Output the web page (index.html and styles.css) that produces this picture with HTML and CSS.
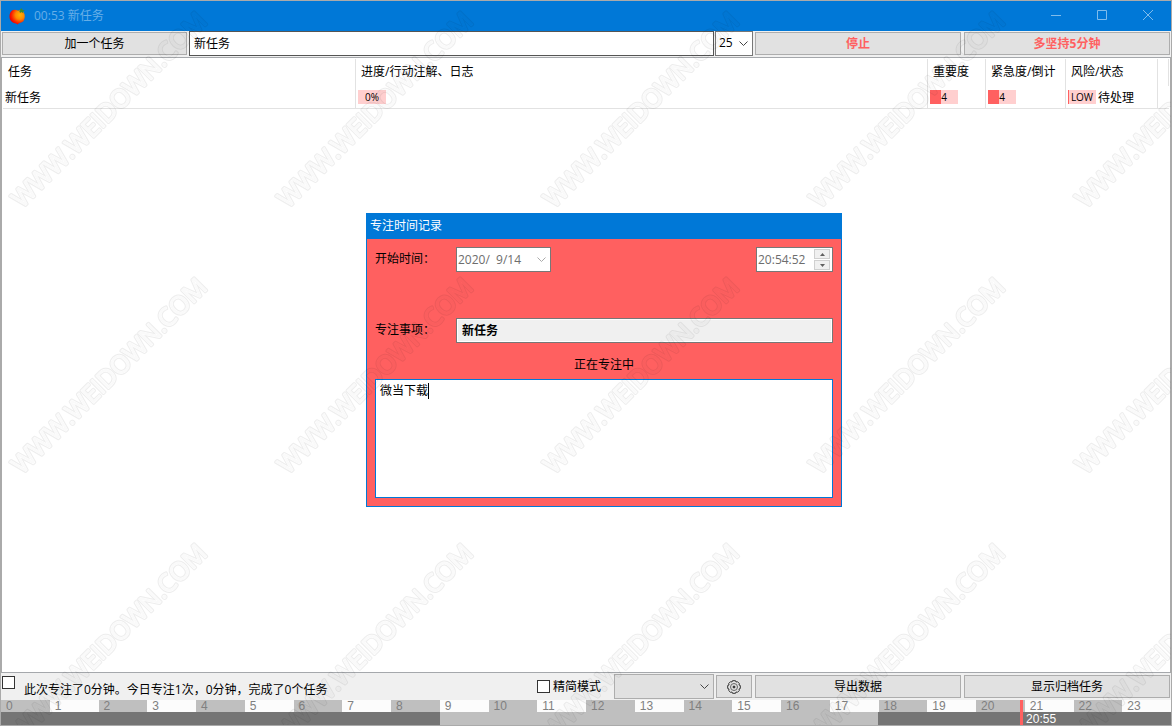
FILE: index.html
```html
<!DOCTYPE html>
<html lang="zh-CN">
<head>
<meta charset="utf-8">
<title>00:53 新任务</title>
<link rel="stylesheet" href="styles.css">
</head>
<body>
<div class="window">
  <header class="titlebar">
    <svg class="tomato" viewBox="0 0 17 17" aria-hidden="true">
      <defs><radialGradient id="skin" cx=".68" cy=".36" r=".7"><stop offset="0" stop-color="#ffb400"/><stop offset=".4" stop-color="#ff8a00"/><stop offset=".8" stop-color="#fb1c00"/><stop offset="1" stop-color="#e80000"/></radialGradient></defs>
      <path d="M3 2.500C5 1 7 2 9 2.500c2-.700 4-.200 5.500 1.500 2 3 1.500 6.500 0 9-1.500 1.500-3.500 2-4.500 2.300L8.500 16.500 7 15.500C4 15 1.500 13.500.700 10.500.200 7.500.500 4.500 3 2.500z" fill="url(#skin)"/>
      <path d="M8 2.500l3 .300.500-2 1.500-.300.500 1.500 2.500.500-2 1 .500 2-2-1.500-1.500 1-.500-1.700z" fill="#3f8a2c"/>
    </svg>
    <h1 class="caption">00:53 新任务</h1>
    <div class="window-buttons">
      <button type="button" aria-label="最小化"><svg viewBox="0 0 10 10"><path d="M0 5.500H10"/></svg></button>
      <button type="button" aria-label="最大化"><svg viewBox="0 0 10 10"><path d="M.500 .500H9.500V9.500H.500z"/></svg></button>
      <button type="button" aria-label="关闭"><svg viewBox="0 0 10 10"><path d="M0 0L10 10M10 0L0 10"/></svg></button>
    </div>
  </header>

  <div class="toolbar">
    <button type="button" class="btn">加一个任务</button>
    <input class="task-input" type="text" value="新任务" aria-label="任务名称">
    <div class="drop minutes">
      <select aria-label="分钟"><option>25</option></select>
      <svg class="chevron" viewBox="0 0 9 6"><path d="M.500 .500L4.500 4.500L8.500 .500"/></svg>
    </div>
    <button type="button" class="btn alert">停止</button>
    <button type="button" class="btn alert">多坚持5分钟</button>
  </div>

  <main class="list">
    <table class="tasks">
      <colgroup><col class="c-task"><col><col class="c-weight"><col class="c-urgent"><col class="c-risk"><col class="c-end"></colgroup>
      <thead>
        <tr><th>任务</th><th>进度/行动注解、日志</th><th>重要度</th><th>紧急度/倒计</th><th>风险/状态</th><th></th></tr>
      </thead>
      <tbody>
        <tr>
          <td class="name">新任务</td>
          <td><span class="meter">0%</span></td>
          <td><span class="meter part">4</span></td>
          <td><span class="meter part">4</span></td>
          <td><span class="meter low">LOW</span>待处理</td>
          <td></td>
        </tr>
      </tbody>
    </table>
  </main>

  <footer class="statusbar">
    <input class="tick status-tick" type="checkbox" aria-label="显示统计">
    <p class="summary">此次专注了0分钟。今日专注1次，0分钟，完成了0个任务</p>
    <label class="simple"><input class="tick" type="checkbox">精简模式</label>
    <div class="drop filter">
      <select aria-label="筛选"><option></option></select>
      <svg class="chevron" viewBox="0 0 9 6"><path d="M.500 .500L4.500 4.500L8.500 .500"/></svg>
    </div>
    <button type="button" class="btn settings" aria-label="设置">
      <svg class="gear" viewBox="0 0 14 14"><path d="M5.500 .700h3l.500 1.300 1.500-.300 1.800 1.800-.300 1.500 1.300.500v3l-1.300.500.300 1.500-1.800 1.800-1.500-.300-.500 1.300h-3l-.500-1.300-1.500.300-1.800-1.800.300-1.500-1.300-.500v-3l1.300-.500-.300-1.500 1.800-1.800 1.500.300z"/><circle class="ring" cx="7" cy="7" r="3.500"/><circle class="hub" cx="7" cy="7" r="1"/></svg>
    </button>
    <button type="button" class="btn">导出数据</button>
    <button type="button" class="btn">显示归档任务</button>
  </footer>

  <div class="timeline">
    <ol class="hours">
      <li>0</li><li>1</li><li>2</li><li>3</li><li>4</li><li>5</li><li>6</li><li>7</li><li>8</li><li>9</li><li>10</li><li>11</li><li>12</li><li>13</li><li>14</li><li>15</li><li>16</li><li>17</li><li>18</li><li>19</li><li>20</li><li>21</li><li>22</li><li>23</li>
    </ol>
    <div class="day"></div>
    <div class="now" style="left:87.100%"><span>20:55</span></div>
  </div>

  <section class="dialog" role="dialog" aria-labelledby="dialog-title">
    <h2 class="dialog-title" id="dialog-title">专注时间记录</h2>
    <form class="record">
      <div class="line first">
        <label for="start">开始时间：</label>
        <div class="field date">
          <input id="start" type="text" value="2020/&nbsp; 9/14">
          <svg class="chevron" viewBox="0 0 9 6"><path d="M.500 .500L4.500 4.500L8.500 .500"/></svg>
        </div>
        <div class="field time">
          <input type="text" value="20:54:52" aria-label="时间">
          <div class="spin">
            <button type="button" aria-label="增加"><svg viewBox="0 0 5 3"><path d="M0 3L2.500 0L5 3z"/></svg></button>
            <button type="button" aria-label="减少"><svg viewBox="0 0 5 3"><path d="M0 0L2.500 3L5 0z"/></svg></button>
          </div>
        </div>
      </div>
      <div class="line">
        <label for="subject">专注事项：</label>
        <input class="subject" id="subject" type="text" value="新任务" readonly>
      </div>
      <p class="state">正在专注中</p>
      <div class="note"><textarea aria-label="记录" spellcheck="false">微当下载</textarea><i class="caret"></i></div>
    </form>
  </section>

  <svg class="watermark" aria-hidden="true">
    <defs>
      <mask id="ring" maskUnits="userSpaceOnUse" x="0" y="0" width="266" height="266">
        <text class="mask-out" transform="translate(21 208) rotate(-45)">WWW.WEIDOWN.COM</text>
        <text class="mask-in" transform="translate(21 208) rotate(-45)">WWW.WEIDOWN.COM</text>
      </mask>
      <pattern id="mark" width="266" height="266" patternUnits="userSpaceOnUse">
        <rect class="mark-ring" width="266" height="266" mask="url(#ring)"/>
        <text class="mark-core" transform="translate(21 208) rotate(-45)">WWW.WEIDOWN.COM</text>
      </pattern>
    </defs>
    <rect width="100%" height="100%" fill="url(#mark)"/>
  </svg>
</div>
</body>
</html>
```

FILE: styles.css
```css
* { box-sizing: border-box; }

body, h1, h2, p, ol { margin: 0; padding: 0; }

body, button, input, select, textarea {
  font: 12px/16px "Open Sans", "Noto Sans CJK SC", sans-serif;
  color: #000;
}

.window {
  position: relative;
  display: flex;
  flex-direction: column;
  min-height: 100vh;
  border: 1px solid #aaa;
  background: #f0f0f0;
}

.titlebar {
  display: flex;
  align-items: center;
  height: 30px;
  padding-left: 8px;
  background: #0078d7;
}

.tomato { width: 17px; height: 17px; }

.caption {
  flex: 1;
  margin-left: 8px;
  font-size: 12px;
  font-weight: 400;
  color: #66aee7;
}

.window-buttons { display: flex; }

.window-buttons button {
  display: grid;
  place-items: center;
  width: 46px;
  height: 30px;
  padding: 0 0 2px;
  border: 0;
  background: none;
}

.window-buttons svg { width: 10px; height: 10px; fill: none; stroke: #80bceb; }

.toolbar {
  display: grid;
  grid-template-columns: 185px 1fr 38px 208px 209px;
  align-items: start;
  height: 26px;
  padding: 0 1px;
}

.btn {
  display: grid;
  place-items: center;
  height: 23px;
  padding: 0;
  border: 1px solid #adadad;
  background: #e1e1e1;
}

.toolbar .btn { margin-top: 1px; }
.toolbar .alert { margin-left: 2px; font-weight: 700; color: #ff6060; }
.toolbar .alert + .alert { margin-left: 3px; }

.task-input {
  min-width: 0;
  height: 25px;
  margin: 0 1px 0 2px;
  padding: 0 4px 2px;
  border: 1px solid #555;
  background: #fff;
}

.drop { position: relative; height: 25px; }

.drop select {
  width: 100%;
  height: 100%;
  padding: 0 3px 2px;
  border: 1px solid #777;
  border-radius: 0;
  background: #fff;
  appearance: none;
}

.chevron { width: 9px; height: 6px; fill: none; stroke: #444; pointer-events: none; }
.drop .chevron { position: absolute; right: 5px; top: 10px; }

.list {
  flex: 1;
  padding: 1px 1px 0;
  border: 1px solid #a5a8ac;
  border-color: #a5a8ac #aaa;
  background: #fff;
}

.tasks { width: 100%; table-layout: fixed; border-collapse: separate; border-spacing: 0; }
.c-task { width: 353px; }
.c-weight { width: 58px; }
.c-urgent { width: 80px; }
.c-risk { width: 92px; }
.c-end { width: 11px; }

.tasks th {
  height: 27px;
  padding: 0 5px 2px;
  border-right: 1px solid #e2e2e2;
  font-weight: 400;
  text-align: left;
  white-space: nowrap;
}

.tasks td {
  height: 23px;
  padding: 2px 2px 0;
  border: solid #e2e2e2;
  border-width: 0 1px 1px 0;
  white-space: nowrap;
}

.tasks td:last-child { border-right: 0; }

.meter {
  display: inline-block;
  width: 28px;
  height: 14px;
  margin-right: 2px;
  background: #ffcfcf;
  font-size: 10px;
  line-height: 14px;
  text-align: center;
  vertical-align: 1px;
}

.part { background: linear-gradient(to right, #ff6060 11px, #ffcfcf 11px); }
.low { background: linear-gradient(to right, #ff6060 1px, #ffcfcf 1px); }

.statusbar {
  display: grid;
  grid-template-columns: 22px 1fr 77px 100px 38px 209px 209px;
  align-items: start;
  height: 27px;
  padding: 1px 1px 0;
}

.statusbar .btn { margin: 1px 0 0 3px; }
.statusbar .settings { margin-left: 2px; }

.tick {
  width: 13px;
  height: 13px;
  margin: 0;
  border: 1px solid #333;
  background: #fff;
  appearance: none;
}

.status-tick { margin-top: 2px; }
.summary { padding-top: 8px; white-space: nowrap; }
.simple { display: flex; align-items: center; gap: 3px; height: 25px; white-space: nowrap; }
.filter select { border-color: #adadad; background: #e1e1e1; }
.gear { width: 14px; height: 14px; fill: none; stroke: #333; }
.gear .ring { stroke: #666; }
.gear .hub { fill: #222; }

.timeline { position: relative; font: 12px/13px "Liberation Sans", sans-serif; }
.hours { display: grid; grid-template-columns: repeat(24, 1fr); height: 12px; color: #808080; list-style: none; }
.hours li { height: 12px; padding-left: 5px; background: #bfbfbf; }
.hours li:nth-child(even) { background: #fcfcfc; }
.day { height: 13px; background: linear-gradient(to right, #757575 37.500%, #bfbfbf 37.500%, #bfbfbf 75%, #757575 75%); }

.now {
  position: absolute;
  top: 0;
  bottom: 0;
  padding: 13px 0 0 3px;
  border-left: 3px solid #ff6060;
  color: #fff;
}

.dialog {
  position: absolute;
  top: 212px;
  left: 365px;
  width: 476px;
  border: 1px solid #0078d7;
  background: #ff6060;
}

.dialog-title {
  height: 25px;
  padding: 0 3px;
  background: #0078d7;
  color: #fff;
  font-size: 12px;
  font-weight: 400;
  line-height: 24px;
}

.record { padding: 8px; }
.line { display: flex; align-items: center; }
.line label { width: 81px; line-height: 23px; padding-bottom: 2px; }
.first { margin-bottom: 46px; }

.field {
  display: flex;
  align-items: center;
  height: 25px;
  border: 1px solid #777;
  background: #fff;
}

.field input {
  flex: 1;
  min-width: 0;
  padding: 0 1px;
  border: 0;
  outline: 0;
  background: none;
  color: #6d6d6d;
}

.date { width: 95px; padding-right: 4px; }
.date .chevron { stroke: #aaa; }
.time { width: 77px; margin-left: auto; padding-right: 2px; }
.spin { display: grid; gap: 1px; }

.spin button {
  display: grid;
  place-items: center;
  width: 16px;
  height: 10px;
  padding: 0;
  border: 1px solid #d0d0d0;
  background: #f0f0f0;
}

.spin svg { width: 5px; height: 3px; fill: #606060; }

.subject {
  flex: 1;
  height: 25px;
  padding: 0 5px 2px;
  border: 1px solid #777;
  background: #f0f0f0;
  box-shadow: inset 0 0 0 1px #fff;
  font-weight: 700;
}

.state { margin: 14px 0 6px; text-align: center; }

.note { position: relative; }

.note textarea {
  display: block;
  width: 100%;
  height: 119px;
  padding: 3px 4px;
  border: 1px solid #0078d7;
  outline: 0;
  background: #fff;
  resize: none;
}

.caret { position: absolute; top: 4px; left: 53px; width: 1px; height: 16px; background: #000; }

.watermark {
  position: absolute;
  inset: 0;
  width: 100%;
  height: 100%;
  pointer-events: none;
}

.watermark text { font: 25px "Open Sans", sans-serif; stroke-linejoin: round; }
.mask-out { fill: #fff; stroke: #fff; stroke-width: 3px; }
.mask-in { fill: #000; stroke: #000; stroke-width: 1px; }
.mark-ring { fill: #000; fill-opacity: .07; }
.mark-core { fill: #000; fill-opacity: .02; }
```
